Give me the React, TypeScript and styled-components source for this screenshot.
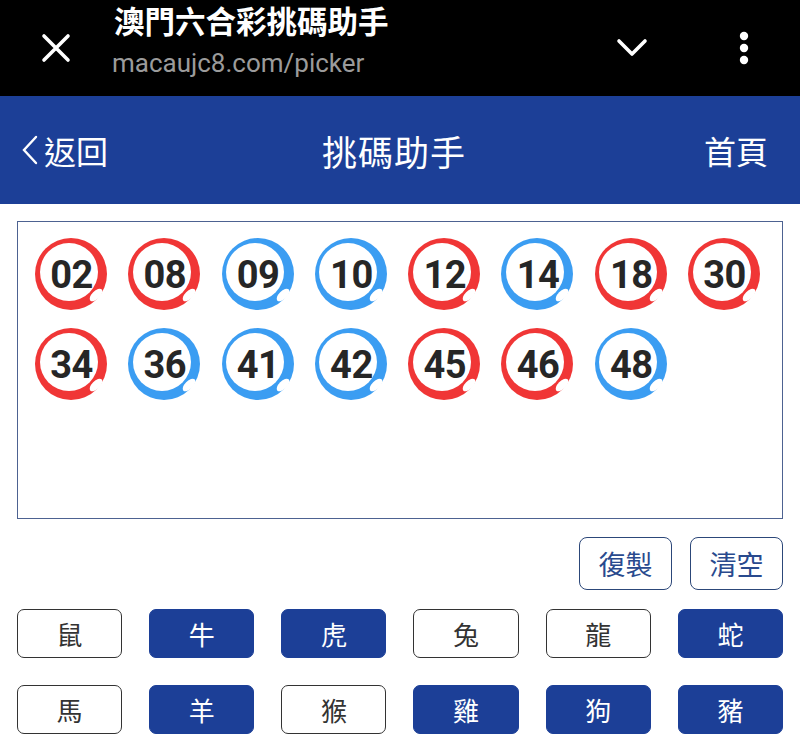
import * as React from 'react'
import styled, { createGlobalStyle } from 'styled-components'

const GlobalStyle = createGlobalStyle`
  body {
    margin: 0;
    background: #fff;
    font-family: 'Noto Sans CJK TC', 'Noto Sans', sans-serif;
  }
`

const BRAND = '#1c3f97'

const Page = styled.div`
  width: 800px;
  min-height: 738px;
  background: #fff;
`

const BrowserBar = styled.div`
  height: 96px;
  background: #000;
  display: flex;
  align-items: center;
  padding: 0 46px 0 38px;
  box-sizing: border-box;
`

const IconButton = styled.div<{ $w?: number }>`
  width: ${(p) => p.$w ?? 36}px;
  display: flex;
  align-items: center;
  justify-content: center;
`

const BarTitles = styled.div`
  flex: 1;
  align-self: flex-start;
  display: flex;
  flex-direction: column;
  margin-left: 40px;
  padding-top: 1px;
`

const SiteTitle = styled.div`
  color: #fff;
  font-size: 30.5px;
  font-weight: 700;
  line-height: 38px;
  margin-bottom: 7px;
`

const SiteUrl = styled.div`
  color: #9b9b9b;
  font-family: Roboto, 'Liberation Sans', sans-serif;
  font-size: 26px;
  line-height: 34px;
  margin-left: -2px;
`

const Header = styled.div`
  height: 108px;
  background: ${BRAND};
  display: grid;
  grid-template-columns: 1fr auto 1fr;
  align-items: center;
  padding: 0 32px 0 20px;
  color: #fff;
`

const Back = styled.div`
  display: flex;
  align-items: center;
  gap: 4px;
  font-size: 32px;
`

const HeaderTitle = styled.div`
  font-size: 35px;
  letter-spacing: 1px;
`

const HomeLink = styled.div`
  justify-self: end;
  font-size: 32px;
`

const Body = styled.div`
  padding: 17px 17px 0 17px;
`

const BallBox = styled.div`
  height: 298px;
  box-sizing: border-box;
  border: 1.5px solid #4d6291;
  padding: 16px 0 0 17px;
  display: grid;
  grid-template-columns: repeat(8, 72px);
  grid-auto-rows: 72px;
  column-gap: 21.3px;
  row-gap: 18px;
  align-content: start;
`

const Ball = styled.div<{ $color: string }>`
  position: relative;
  width: 72px;
  height: 72px;
  border-radius: 50%;
  background: ${(p) => p.$color};
`

const BallFace = styled.div`
  position: absolute;
  left: 4.5px;
  top: 4.5px;
  width: 58px;
  height: 58px;
  box-sizing: border-box;
  padding: 6px 0 0 6px;
  border-radius: 50%;
  background: #fff;
  display: flex;
  align-items: center;
  justify-content: center;
  font-family: Roboto, 'Liberation Sans', sans-serif;
  font-weight: 700;
  font-size: 38px;
  color: #262626;
  letter-spacing: -0.5px;
`

const Shine = styled.div`
  position: absolute;
  left: 53px;
  top: 53px;
  width: 16px;
  height: 8px;
  border-radius: 50%;
  background: #fff;
  transform: rotate(-45deg);
`

const Actions = styled.div`
  display: flex;
  justify-content: flex-end;
  gap: 18px;
  margin-top: 18px;
`

const ActionButton = styled.div`
  width: 93px;
  height: 53px;
  box-sizing: border-box;
  border: 1.5px solid #2c4779;
  border-radius: 8px;
  color: #294a8e;
  font-size: 27px;
  display: flex;
  align-items: center;
  justify-content: center;
`

const ZodiacGrid = styled.div`
  display: grid;
  grid-template-columns: repeat(6, 1fr);
  column-gap: 27px;
  row-gap: 27px;
  margin-top: 19px;
`

const Zodiac = styled.div<{ $on: boolean }>`
  height: 49px;
  box-sizing: border-box;
  border-radius: 7px;
  border: 1.5px solid ${(p) => (p.$on ? BRAND : '#333')};
  background: ${(p) => (p.$on ? BRAND : '#fff')};
  color: ${(p) => (p.$on ? '#fff' : '#333')};
  font-size: 26px;
  display: flex;
  align-items: center;
  justify-content: center;
`

const RED = '#f03636'
const BLUE = '#3b9df2'

const balls: [string, string][] = [
  ['02', RED], ['08', RED], ['09', BLUE], ['10', BLUE], ['12', RED], ['14', BLUE],
  ['18', RED], ['30', RED], ['34', RED], ['36', BLUE], ['41', BLUE], ['42', BLUE],
  ['45', RED], ['46', RED], ['48', BLUE],
]

const zodiacs: [string, boolean][] = [
  ['鼠', false], ['牛', true], ['虎', true], ['兔', false], ['龍', false], ['蛇', true],
  ['馬', false], ['羊', true], ['猴', false], ['雞', true], ['狗', true], ['豬', true],
]

export default function App() {
  return (
    <Page>
      <GlobalStyle />
      <BrowserBar>
        <IconButton>
          <svg width="30" height="30" viewBox="0 0 30 30">
            <path d="M3 3 L27 27 M27 3 L3 27" stroke="#fff" strokeWidth="3.6" strokeLinecap="round" />
          </svg>
        </IconButton>
        <BarTitles>
          <SiteTitle>澳門六合彩挑碼助手</SiteTitle>
          <SiteUrl>macaujc8.com/picker</SiteUrl>
        </BarTitles>
        <IconButton $w={40}>
          <svg width="32" height="20" viewBox="0 0 32 20">
            <path d="M3 3 L16 16 L29 3" stroke="#fff" strokeWidth="3.6" fill="none" strokeLinecap="round" strokeLinejoin="round" />
          </svg>
        </IconButton>
        <IconButton $w={20} style={{ marginLeft: 82 }}>
          <svg width="10" height="34" viewBox="0 0 10 34">
            <circle cx="5" cy="5" r="4.2" fill="#fff" />
            <circle cx="5" cy="17" r="4.2" fill="#fff" />
            <circle cx="5" cy="29" r="4.2" fill="#fff" />
          </svg>
        </IconButton>
      </BrowserBar>

      <Header>
        <Back>
          <svg width="20" height="32" viewBox="0 0 20 32">
            <path d="M16 3 L4 16 L16 29" stroke="#fff" strokeWidth="2.4" fill="none" strokeLinecap="round" />
          </svg>
          <span>返回</span>
        </Back>
        <HeaderTitle>挑碼助手</HeaderTitle>
        <HomeLink>首頁</HomeLink>
      </Header>

      <Body>
        <BallBox>
          {balls.map(([num, color]) => (
            <Ball key={num} $color={color}>
              <BallFace>{num}</BallFace>
              <Shine />
            </Ball>
          ))}
        </BallBox>

        <Actions>
          <ActionButton>復製</ActionButton>
          <ActionButton>清空</ActionButton>
        </Actions>

        <ZodiacGrid>
          {zodiacs.map(([name, on]) => (
            <Zodiac key={name} $on={on}>{name}</Zodiac>
          ))}
        </ZodiacGrid>
      </Body>
    </Page>
  )
}
